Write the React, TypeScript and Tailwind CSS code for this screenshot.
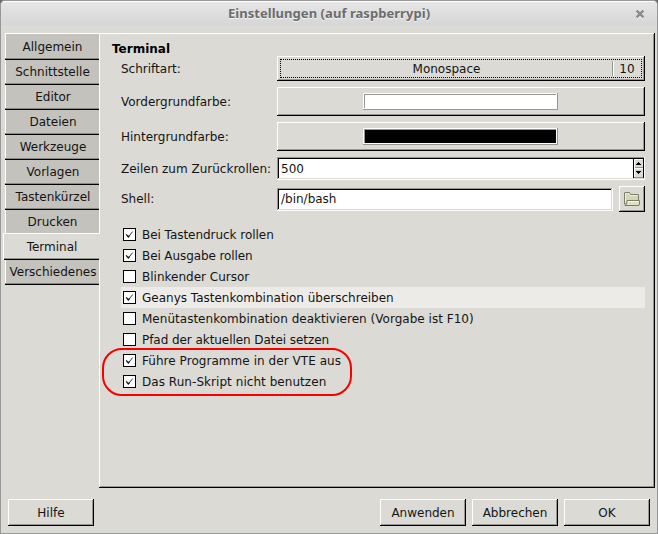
import React from "react";

const raised =
  "bg-[#dbdad5] shadow-[inset_-1px_-1px_0_#000,inset_1px_1px_0_#fff,inset_-2px_-2px_0_#979792]";
const sunken =
  "bg-white shadow-[inset_-1px_-1px_0_#fff,inset_1px_1px_0_#979792,inset_-2px_-2px_0_#dbdad5,inset_2px_2px_0_#000]";

const tabs = [
  { name: "Allgemein", box: "h-[27px] pt-[2px] pl-[1px]" },
  { name: "Schnittstelle", box: "h-[25px] pl-[1px]" },
  { name: "Editor", box: "h-[25px] pl-[2px]" },
  { name: "Dateien", box: "h-[25px] pl-[2px]" },
  { name: "Werkzeuge", box: "h-[25px] pl-[2px]" },
  { name: "Vorlagen", box: "h-[25px] pl-[2px]" },
  { name: "Tastenkürzel", box: "h-[25px] pl-[2px]" },
  { name: "Drucken", box: "h-[23px] pl-[1px]" },
  { name: "Terminal", box: "h-[27px]" },
  { name: "Verschiedenes", box: "h-[25px] pl-[2px]" },
];

const options = [
  { label: "Bei Tastendruck rollen", on: true, track: "tracking-[-0.04px]" },
  { label: "Bei Ausgabe rollen", on: true, track: "tracking-[-0.1px]" },
  { label: "Blinkender Cursor", on: false, track: "" },
  { label: "Geanys Tastenkombination überschreiben", on: true, track: "" },
  { label: "Menütastenkombination deaktivieren (Vorgabe ist F10)", on: false, track: "tracking-[0.02px]" },
  { label: "Pfad der aktuellen Datei setzen", on: false, track: "tracking-[-0.06px]" },
  { label: "Führe Programme in der VTE aus", on: true, track: "tracking-[0.05px]" },
  { label: "Das Run-Skript nicht benutzen", on: true, track: "tracking-[0.05px]" },
];

function Tab({ name, box }: { name: string; box: string }) {
  if (name === "Terminal") {
    return (
      <div className="relative z-10 -mr-px flex h-[27px] w-[97px] justify-center border-l border-t border-white bg-[#dbdad5] leading-[26px]">
        <span>{name}</span>
        <div className="absolute bottom-0 left-0 right-[1px] h-[2px] border-b border-black bg-[#979792]" />
      </div>
    );
  }
  const edge =
    name === "Drucken"
      ? "shadow-[inset_1px_0_0_#fff]"
      : name === "Allgemein"
        ? "shadow-[inset_0_-1px_0_#000,inset_0_-2px_0_#8b8b86,inset_1px_1px_0_#fff]"
        : "shadow-[inset_0_-1px_0_#000,inset_0_-2px_0_#8b8b86,inset_1px_0_0_#fff]";
  return (
    <div className={`flex w-[94px] justify-center bg-[#c4c2bd] leading-[24px] ${box} ${edge}`}>
      <span className="whitespace-nowrap">{name}</span>
    </div>
  );
}

function Swatch({ color }: { color: string }) {
  return (
    <div className={`flex h-[29px] w-[368px] justify-center pr-[1px] pt-[6px] ${raised}`}>
      <div
        className={`h-[17px] w-[195px] shadow-[inset_-1px_-1px_0_#979792,inset_1px_1px_0_#fff,inset_-2px_-2px_0_#fff,inset_2px_2px_0_#979792] ${color}`}
      />
    </div>
  );
}

function Row({ label, className, children }: { label: string; className: string; children: React.ReactNode }) {
  return (
    <div className={`flex items-center ${className}`}>
      <div className="w-[156px] whitespace-nowrap leading-[16px]">{label}</div>
      {children}
    </div>
  );
}

function Check({ on }: { on: boolean }) {
  return (
    <div className="h-[13px] w-[13px] border border-black bg-white">
      {on && (
        <svg width="11" height="11" viewBox="0 0 11 11" className="block">
          <path d="M4.4 8 L8.6 2.6" fill="none" stroke="#333" strokeWidth="1" />
          <path d="M2.2 5.3 L4.3 7.9 L5.6 6.4" fill="none" stroke="#111" strokeWidth="1.3" />
        </svg>
      )}
    </div>
  );
}

function Button({ children, className = "" }: { children: React.ReactNode; className?: string }) {
  return (
    <button className={`h-[27px] w-[86px] text-center leading-[26px] ${raised} ${className}`}>{children}</button>
  );
}

export default function App() {
  return (
    <div className="h-[534px] w-[658px] bg-[#6d6d6d] font-['DejaVu_Sans',sans-serif] text-[12px] text-[#141414]">
      <div className="flex h-full flex-col overflow-hidden rounded-t-[5px] border border-[#979797] bg-[#dbdad5]">
        <div className="relative flex h-[24px] items-center justify-center border-t border-white bg-linear-to-b from-[#e6e6e6] to-[#d6d6d6] pt-[1px]">
          <span className="font-['Noto_Sans',sans-serif] text-[13px] font-bold tracking-[0.05px] text-[#6c6c6c] [text-shadow:0_1px_0_#f4f4f4]">
            Einstellungen (auf raspberrypi)
          </span>
          <svg width="10" height="10" viewBox="0 0 10 10" className="absolute right-[12px] top-[7px]">
            <path d="M2 3 L8 9 M8 3 L2 9" stroke="#fff" strokeWidth="2.4" />
            <path d="M1.6 1.6 L8.4 8.4 M8.4 1.6 L1.6 8.4" stroke="#8c8c8c" strokeWidth="2.5" />
          </svg>
        </div>

        <div className="flex h-[463px] pt-[8px]">
          <div className="flex w-[98px] flex-col items-end">
            {tabs.map((t) => (
              <Tab key={t.name} {...t} />
            ))}
          </div>
          <div className="h-[455px] w-[556px] shadow-[inset_-1px_-1px_0_#000,inset_1px_1px_0_#fff,inset_-2px_-2px_0_#979792]">
            <div className="pl-[13px] pt-[8px] text-[12px] font-bold leading-[15px] text-black">
              <span className="relative top-[1px]">Terminal</span>
            </div>
            <div className="pl-[22px]">
              <Row label="Schriftart:" className="h-[25px]">
                <div className={`h-[25px] w-[368px] p-[3px] ${raised}`}>
                  <div className="flex h-[19px] w-[362px] border border-dotted border-black leading-[19px]">
                    <div className="w-[331px] text-center">Monospace</div>
                    <div className="mt-[1px] h-[15px] w-[2px] border-l border-r border-l-[#979792] border-r-white" />
                    <div className="flex-1 pr-px text-center">10</div>
                  </div>
                </div>
              </Row>
              <Row label="Vordergrundfarbe:" className="mt-[6px]">
                <Swatch color="bg-white" />
              </Row>
              <Row label="Hintergrundfarbe:" className="mt-[6px]">
                <Swatch color="bg-black" />
              </Row>
              <Row label="Zeilen zum Zurückrollen:" className="mt-[6px]">
                <div className={`flex h-[23px] w-[368px] pl-[4px] ${sunken}`}>
                  <span className="w-[352px] leading-[24px]">500</span>
                  <div className="mt-px h-[20px] w-[11px] border-x border-t border-black bg-[#dbdad5]">
                    <svg width="9" height="19" viewBox="0 0 9 19" className="block">
                      <path d="M0 8.5 H9 M0 18.5 H9" stroke="#979792" />
                      <path d="M0 9.5 H9 M0 .5 H9 M.5 0 V18" stroke="#fff" />
                      <path d="M4 3h1v1h1v1h1v1H2V5h1V4h1z M2 12h5v1h-1v1h-1v1H4v-1H3v-1H2z" fill="#000" />
                    </svg>
                  </div>
                </div>
              </Row>
              <Row label="Shell:" className="mt-[6px]">
                <div className={`h-[23px] w-[336px] pl-[4px] leading-[22px] ${sunken}`}>/bin/bash</div>
                <div className={`ml-[6px] flex h-[26px] w-[26px] items-center justify-center ${raised}`}>
                  <svg width="16" height="16" viewBox="0 0 16 16">
                    <path d="M.5 13 V2 Q.5 1.5 1 1.5 H5.5 L6.5 3.5 H14 Q14.5 3.5 14.5 4 V13 Z" fill="#d3d7b4" stroke="#7b7d68" />
                    <path d="M1.5 12 V2.5 H5 L6 4.5 H13.5" fill="none" stroke="#eef0da" />
                    <path d="M1 14.5 Q3 13.5 3 9.5 H15.5 V13 Q15.5 14.5 14 14.5 Z" fill="#dde2c2" stroke="#7b7d68" />
                    <path d="M4 10.5 H14.5" stroke="#f8faec" />
                  </svg>
                </div>
              </Row>
              <div className="relative mt-[12px] w-[524px]">
                {options.map((o, i) => (
                  <div key={o.label} className={`flex h-[21px] items-center gap-[6px] pl-[2px] ${i === 3 ? "bg-[#edebe7]" : ""}`}>
                    <Check on={o.on} />
                    <span className={`whitespace-nowrap leading-[16px] ${o.track}`}>{o.label}</span>
                  </div>
                ))}
                <div className="absolute left-[-19px] top-[124px] h-[48px] w-[250px] rounded-[20px] border-2 border-[#f80000]" />
              </div>
            </div>
          </div>
        </div>

        <div className="flex pl-[7px] pt-[11px]">
          <Button>Hilfe</Button>
          <Button className="ml-[286px]">Anwenden</Button>
          <Button className="ml-[6px]">Abbrechen</Button>
          <Button className="ml-[6px]">OK</Button>
        </div>
      </div>
    </div>
  );
}
